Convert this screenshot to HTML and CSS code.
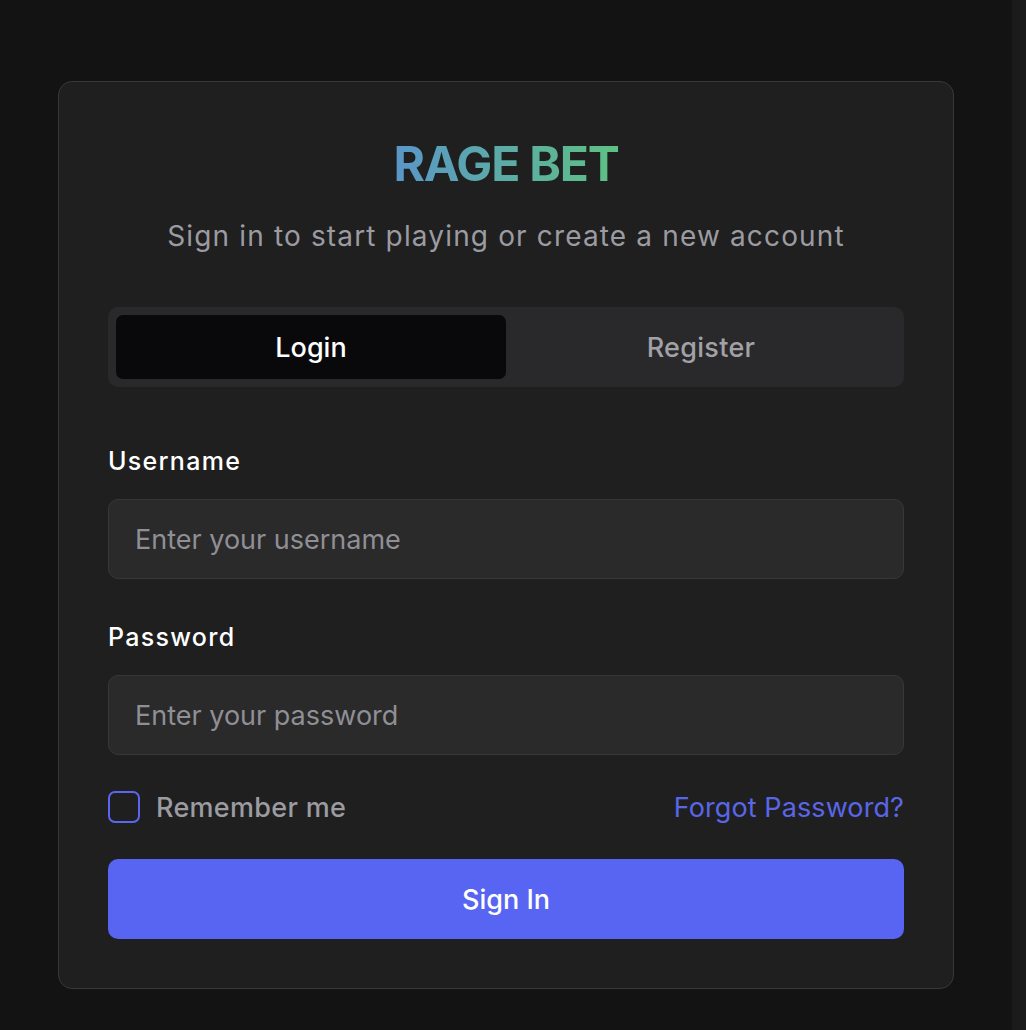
FILE: index.html
```html
<!DOCTYPE html>
<html lang="en">
<head>
<meta charset="utf-8">
<title>RAGE BET</title>
<link rel="stylesheet" href="styles.css">
</head>
<body>
<div class="page">
  <main class="main">
    <section class="card">
      <header class="card-head">
        <h1 class="brand">RAGE BET</h1>
        <p class="subtitle">Sign in to start playing or create a new account</p>
      </header>
      <div class="tabs">
        <button class="tab tab-active" type="button">Login</button>
        <button class="tab" type="button">Register</button>
      </div>
      <form class="form">
        <div class="field">
          <label class="label" for="username">Username</label>
          <input class="input" id="username" type="text" placeholder="Enter your username">
        </div>
        <div class="field">
          <label class="label" for="password">Password</label>
          <input class="input" id="password" type="password" placeholder="Enter your password">
        </div>
        <div class="options">
          <label class="remember">
            <span class="checkbox"></span>
            <span class="remember-text">Remember me</span>
          </label>
          <a class="forgot" href="#">Forgot Password?</a>
        </div>
        <button class="submit" type="button">Sign In</button>
      </form>
    </section>
  </main>
  <div class="scroll-track"></div>
</div>
</body>
</html>
```

FILE: styles.css
```css
* {
  box-sizing: border-box;
}

html, body {
  margin: 0;
  padding: 0;
  height: 100%;
}

body {
  background: #131313;
  font-family: Inter, "Noto Sans", "Liberation Sans", sans-serif;
  color: #ffffff;
}

.page {
  display: flex;
  min-height: 100%;
}

.main {
  flex: 1;
  display: flex;
  justify-content: center;
  align-items: flex-start;
  padding-top: 81px;
}

.scroll-track {
  width: 14px;
  flex: 0 0 14px;
  background: #1b1b1b;
}

.card {
  width: 896px;
  background: #1f1f1f;
  border: 1px solid #383838;
  border-radius: 14px;
  padding: 58px 49px 49px;
}

.card-head {
  display: flex;
  flex-direction: column;
  align-items: center;
}

.brand {
  margin: 0;
  font-size: 48px;
  line-height: 48px;
  font-weight: 700;
  letter-spacing: -1.2px;
  background: linear-gradient(90deg, #5a96c8 0%, #5ec183 100%);
  -webkit-background-clip: text;
  background-clip: text;
  color: transparent;
}

.subtitle {
  margin: 28px 0 0;
  font-size: 28px;
  line-height: 40px;
  letter-spacing: 1.15px;
  color: #9b9ba1;
}

.tabs {
  margin-top: 51px;
  display: grid;
  grid-template-columns: 1fr 1fr;
  padding: 8px;
  background: #29292b;
  border-radius: 10px;
}

.tab {
  height: 64px;
  border: 0;
  background: transparent;
  font-family: inherit;
  font-size: 27px;
  font-weight: 500;
  color: #a1a1a6;
  border-radius: 7px;
  padding: 0;
}

.tab + .tab {
  letter-spacing: 0.3px;
}

.tab-active {
  background: #09090b;
  color: #ffffff;
}

.form {
  margin-top: 58px;
  display: flex;
  flex-direction: column;
}

.field {
  display: flex;
  flex-direction: column;
}

.field + .field {
  margin-top: 42px;
}

.label {
  font-size: 25px;
  line-height: 32px;
  font-weight: 500;
  letter-spacing: 1.3px;
  color: #ffffff;
}

.input {
  margin-top: 22px;
  height: 80px;
  width: 100%;
  background: #2a2a2a;
  border: 1px solid #373737;
  border-radius: 10px;
  padding: 0 26px;
  font-family: inherit;
  font-size: 27px;
  color: #ffffff;
  outline: none;
}

.input::placeholder {
  color: #8f8f95;
}

.options {
  margin-top: 32px;
  height: 40px;
  display: flex;
  align-items: center;
  justify-content: space-between;
}

.remember {
  display: flex;
  align-items: center;
  gap: 16px;
}

.checkbox {
  width: 32px;
  height: 32px;
  border: 2px solid #5a66f0;
  border-radius: 7px;
}

.remember-text {
  font-size: 27px;
  font-weight: 500;
  letter-spacing: 0.3px;
  color: #9b9ba1;
}

.forgot {
  font-size: 27px;
  letter-spacing: 0.1px;
  color: #5a66e8;
  text-decoration: none;
}

.submit {
  margin-top: 32px;
  height: 80px;
  width: 100%;
  border: 0;
  border-radius: 10px;
  background: #5865f2;
  color: #ffffff;
  font-family: inherit;
  font-size: 27px;
  font-weight: 500;
}
```
